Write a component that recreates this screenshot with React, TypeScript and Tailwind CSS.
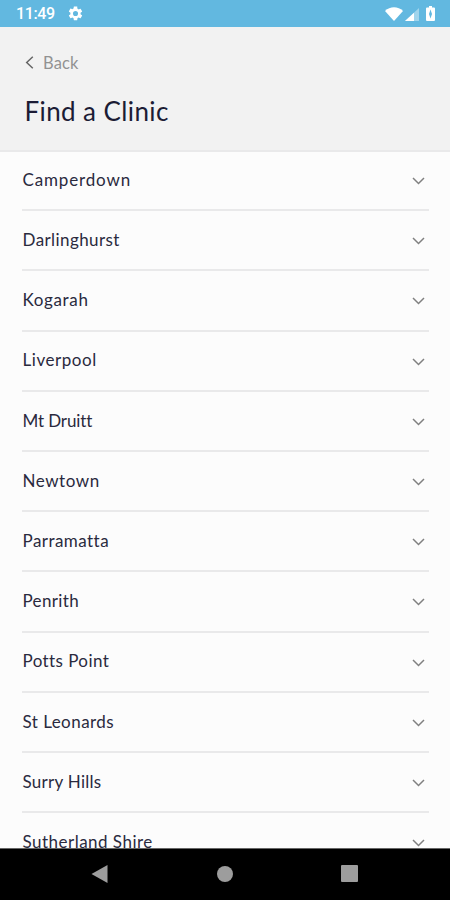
const clinics = [
  { name: 'Camperdown', spacing: 'tracking-[0.85px]' },
  { name: 'Darlinghurst', spacing: 'tracking-[0.42px]' },
  { name: 'Kogarah', spacing: 'tracking-[0.65px]' },
  { name: 'Liverpool', spacing: 'tracking-[0.55px]' },
  { name: 'Mt Druitt', spacing: 'tracking-[-0.1px]' },
  { name: 'Newtown', spacing: 'tracking-[0.55px]' },
  { name: 'Parramatta', spacing: 'tracking-[0.45px]' },
  { name: 'Penrith', spacing: 'tracking-[0.35px]' },
  { name: 'Potts Point', spacing: 'tracking-[0.42px]' },
  { name: 'St Leonards', spacing: 'tracking-[0.45px]' },
  { name: 'Surry Hills', spacing: 'tracking-[0.28px]' },
  { name: 'Sutherland Shire', spacing: 'tracking-[0.48px]' },
];

function StatusBar() {
  return (
    <div className="flex h-[27px] shrink-0 items-center bg-[#62b8e0] pr-[15px] pl-4 text-white">
      <span className="pt-px font-[Roboto,sans-serif] text-[16px] leading-[26px] font-medium tracking-[-0.4px]">11:49</span>
      <svg className="ml-[12px] size-[17px]" viewBox="0 0 24 24" fill="currentColor">
        <path d="M19.14 12.94c.04-.3.06-.61.06-.94s-.02-.64-.07-.94l2.03-1.58a.49.49 0 0 0 .12-.61l-1.92-3.32a.49.49 0 0 0-.59-.22l-2.39.96a7 7 0 0 0-1.62-.94l-.36-2.54A.48.48 0 0 0 13.92 2h-3.84c-.24 0-.43.17-.47.41l-.36 2.54c-.59.24-1.13.57-1.62.94l-2.39-.96a.48.48 0 0 0-.59.22L2.74 8.87a.48.48 0 0 0 .12.61l2.03 1.58a6 6 0 0 0 0 1.88l-2.03 1.58a.49.49 0 0 0-.12.61l1.92 3.32c.12.22.37.29.59.22l2.39-.96c.5.38 1.03.7 1.62.94l.36 2.54c.05.24.24.41.48.41h3.84c.24 0 .44-.17.47-.41l.36-2.54a7 7 0 0 0 1.62-.94l2.39.96c.22.08.47 0 .59-.22l1.92-3.32a.48.48 0 0 0-.12-.61zM12 15.6a3.6 3.6 0 1 1 0-7.2 3.6 3.6 0 0 1 0 7.2z" />
      </svg>
      <svg className="ml-auto h-[14px] w-[18px]" viewBox="0 0 18 14" fill="currentColor">
        <path d="M0 4C5-1 13-1 18 4L9 14z" />
      </svg>
      <svg className="mt-px ml-[2px] h-[13px] w-[14px]" viewBox="0 0 14 13" fill="currentColor">
        <path opacity=".4" d="M14 0v13H0z" />
        <path d="M9 4.7V13H0z" />
      </svg>
      <svg className="ml-[7px] h-[15px] w-[9px]" viewBox="0 0 9 15">
        <path fill="currentColor" d="M3 0h3v1.500h2a1 1 0 0 1 1 1V14a1 1 0 0 1-1 1H1a1 1 0 0 1-1-1V2.500a1 1 0 0 1 1-1h2z" />
        <path fill="#62b8e0" d="M4.500 3.500 3 8l1.500 4.500L6 8z" />
      </svg>
    </div>
  );
}

function Header() {
  return (
    <header className="h-[125px] shrink-0 border-b-2 border-[#e9e9ea] bg-[#f2f2f2]">
      <button className="mt-[25px] ml-[25px] flex h-[22px] items-center text-[16.5px] leading-[22px] tracking-[0.1px] text-[#929292]">
        <svg className="mr-[9px] mb-[2px] h-[13px] w-[9px]" viewBox="0 0 9 13" fill="none" stroke="#666" strokeWidth="1.5">
          <path d="M7.800.7 1.700 6.500l6.100 5.800" />
        </svg>
        Back
      </button>
      <h1 className="mt-[19px] ml-[24.5px] text-[26px] leading-[36px] tracking-[0.4px] text-[#1c1c35]">Find a Clinic</h1>
    </header>
  );
}

export default function App() {
  return (
    <div className="flex h-[900px] w-[450px] flex-col overflow-hidden bg-[#fcfcfc] font-[Lato,sans-serif]">
      <StatusBar />
      <Header />
      <main className="-mt-px min-h-0 flex-1 overflow-hidden pr-[21px] pl-[22px]">
        {clinics.map((clinic) => (
          <div key={clinic.name} className="flex h-[60.2px] items-center justify-between border-b-2 border-[#e9e9ea] pr-[4px] pl-[0.5px] text-[17px] text-[#2a2a3e]">
            <span className={`pb-px ${clinic.spacing}`}>{clinic.name}</span>
            <svg className="mt-[2px] h-[8px] w-[13px]" viewBox="0 0 13 8" fill="none" stroke="#808080" strokeWidth="1.5">
              <path d="m1 1 5.500 5.500L12 1" />
            </svg>
          </div>
        ))}
      </main>
      <nav className="flex h-[52px] shrink-0 items-center border-t border-[#666] bg-black pb-[2px] pl-[91px]">
        <svg className="h-[18px] w-[17px]" viewBox="0 0 17 18" fill="#9d9d9d">
          <path d="M16.500 0v18L.5 9z" />
        </svg>
        <span className="ml-[109px] size-4 rounded-full bg-[#9d9d9d]" />
        <span className="ml-[108px] size-[17px] rounded-[1px] bg-[#9d9d9d]" />
      </nav>
    </div>
  );
}
